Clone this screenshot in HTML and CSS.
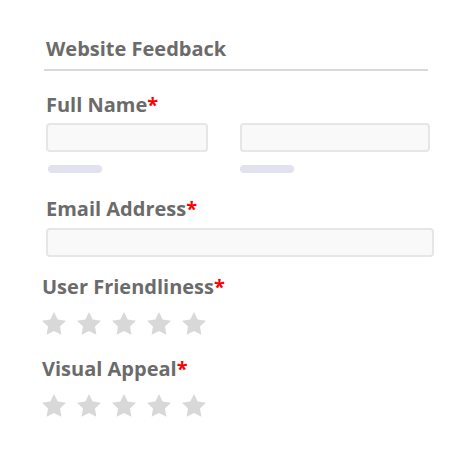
FILE: index.html
```html
<!DOCTYPE html>
<html lang="en">
<head>
    <meta charset="UTF-8">
    <meta name="viewport" content="width=device-width, initial-scale=1.0">
    <title>Website Feedback</title>
    <link rel="stylesheet" href="styles.css">
</head>
<body>
    <div class="form">
        <div class="form-header">
            <h1>Website Feedback</h1>
        </div>

        <div class="field">
            <label class="label">Full Name<span class="req">*</span></label>
            <div class="name-row">
                <div class="name-col">
                    <input type="text" class="input">
                    <div class="hint-bar"></div>
                </div>
                <div class="name-col">
                    <input type="text" class="input">
                    <div class="hint-bar"></div>
                </div>
            </div>
        </div>

        <div class="field email-field">
            <label class="label">Email Address<span class="req">*</span></label>
            <input type="email" class="input input-wide">
        </div>

        <div class="field rating-field">
            <label class="label">User Friendliness<span class="req">*</span></label>
            <div class="stars">
                <svg class="star" viewBox="2 2 20 19.2"><polygon points="12,2 15.09,8.26 22,9.27 17,14.14 18.18,21.02 12,17.77 5.82,21.02 7,14.14 2,9.27 8.91,8.26"/></svg>
                <svg class="star" viewBox="2 2 20 19.2"><polygon points="12,2 15.09,8.26 22,9.27 17,14.14 18.18,21.02 12,17.77 5.82,21.02 7,14.14 2,9.27 8.91,8.26"/></svg>
                <svg class="star" viewBox="2 2 20 19.2"><polygon points="12,2 15.09,8.26 22,9.27 17,14.14 18.18,21.02 12,17.77 5.82,21.02 7,14.14 2,9.27 8.91,8.26"/></svg>
                <svg class="star" viewBox="2 2 20 19.2"><polygon points="12,2 15.09,8.26 22,9.27 17,14.14 18.18,21.02 12,17.77 5.82,21.02 7,14.14 2,9.27 8.91,8.26"/></svg>
                <svg class="star" viewBox="2 2 20 19.2"><polygon points="12,2 15.09,8.26 22,9.27 17,14.14 18.18,21.02 12,17.77 5.82,21.02 7,14.14 2,9.27 8.91,8.26"/></svg>
            </div>
        </div>

        <div class="field rating-field">
            <label class="label">Visual Appeal<span class="req">*</span></label>
            <div class="stars">
                <svg class="star" viewBox="2 2 20 19.2"><polygon points="12,2 15.09,8.26 22,9.27 17,14.14 18.18,21.02 12,17.77 5.82,21.02 7,14.14 2,9.27 8.91,8.26"/></svg>
                <svg class="star" viewBox="2 2 20 19.2"><polygon points="12,2 15.09,8.26 22,9.27 17,14.14 18.18,21.02 12,17.77 5.82,21.02 7,14.14 2,9.27 8.91,8.26"/></svg>
                <svg class="star" viewBox="2 2 20 19.2"><polygon points="12,2 15.09,8.26 22,9.27 17,14.14 18.18,21.02 12,17.77 5.82,21.02 7,14.14 2,9.27 8.91,8.26"/></svg>
                <svg class="star" viewBox="2 2 20 19.2"><polygon points="12,2 15.09,8.26 22,9.27 17,14.14 18.18,21.02 12,17.77 5.82,21.02 7,14.14 2,9.27 8.91,8.26"/></svg>
                <svg class="star" viewBox="2 2 20 19.2"><polygon points="12,2 15.09,8.26 22,9.27 17,14.14 18.18,21.02 12,17.77 5.82,21.02 7,14.14 2,9.27 8.91,8.26"/></svg>
            </div>
        </div>
    </div>
</body>
</html>
```

FILE: styles.css
```css
* {
    margin: 0;
    padding: 0;
    box-sizing: border-box;
}

body {
    background: #ffffff;
    color: #6b6b6b;
    font-family: 'Open Sans', 'Liberation Sans', sans-serif;
    margin: 0;
}

.form {
    padding: 36px 0 0 46px;
}

.form-header {
    width: 384px;
    margin-left: -2px;
    padding-left: 2px;
    padding-bottom: 7px;
    border-bottom: 2px solid #d9d9d9;
}

.form-header h1 {
    font-size: 20px;
    font-weight: 700;
    line-height: 26px;
}

.label {
    display: block;
    font-size: 20px;
    font-weight: 700;
    line-height: 26px;
}

.req {
    color: #ff0000;
}

.field {
    margin-top: 21px;
}

.name-row {
    display: grid;
    grid-template-columns: 162px 190px;
    gap: 32px;
    margin-top: 5px;
}

.input {
    display: block;
    width: 100%;
    height: 29px;
    background: #f9f9f9;
    border: 2px solid #e4e7e4;
    border-radius: 4px;
    outline: none;
}

.hint-bar {
    width: 54px;
    height: 8px;
    margin-top: 13px;
    background: #e1e1ef;
    border-radius: 4px;
}

.name-col:first-child .hint-bar {
    margin-left: 2px;
}

.email-field {
    margin-top: 23px;
}

.input-wide {
    width: 388px;
    margin-top: 6px;
}

.rating-field {
    margin-top: 17px;
    margin-left: -4px;
}

.rating-field + .rating-field {
    margin-top: 21px;
}

.stars {
    display: flex;
    gap: 11px;
    margin-top: 12px;
}

.star {
    width: 24px;
    height: 23px;
    fill: #d8d8d8;
}
```
